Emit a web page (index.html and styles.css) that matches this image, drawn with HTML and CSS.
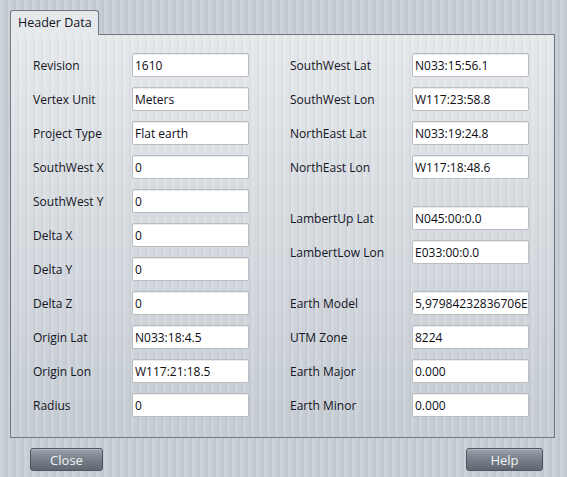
FILE: index.html
```html
<!DOCTYPE html>
<html>
<head>
<meta charset="utf-8">
<link rel="stylesheet" href="styles.css">
</head>
<body>
<div class="window">
  <div class="tabs"><div class="tab">Header Data</div></div>
  <div class="panel">
    <div class="col">
      <div class="row"><span class="lbl">Revision</span><div class="inp">1610</div></div>
      <div class="row"><span class="lbl">Vertex Unit</span><div class="inp">Meters</div></div>
      <div class="row"><span class="lbl">Project Type</span><div class="inp">Flat earth</div></div>
      <div class="row"><span class="lbl">SouthWest X</span><div class="inp">0</div></div>
      <div class="row"><span class="lbl">SouthWest Y</span><div class="inp">0</div></div>
      <div class="row"><span class="lbl">Delta X</span><div class="inp">0</div></div>
      <div class="row"><span class="lbl">Delta Y</span><div class="inp">0</div></div>
      <div class="row"><span class="lbl">Delta Z</span><div class="inp">0</div></div>
      <div class="row"><span class="lbl">Origin Lat</span><div class="inp">N033:18:4.5</div></div>
      <div class="row"><span class="lbl">Origin Lon</span><div class="inp">W117:21:18.5</div></div>
      <div class="row"><span class="lbl">Radius</span><div class="inp">0</div></div>
    </div>
    <div class="col right">
      <div class="row"><span class="lbl">SouthWest Lat</span><div class="inp">N033:15:56.1</div></div>
      <div class="row"><span class="lbl">SouthWest Lon</span><div class="inp">W117:23:58.8</div></div>
      <div class="row"><span class="lbl">NorthEast Lat</span><div class="inp">N033:19:24.8</div></div>
      <div class="row"><span class="lbl">NorthEast Lon</span><div class="inp">W117:18:48.6</div></div>
      <div class="row sep"><span class="lbl">LambertUp Lat</span><div class="inp">N045:00:0.0</div></div>
      <div class="row"><span class="lbl">LambertLow Lon</span><div class="inp">E033:00:0.0</div></div>
      <div class="row sep"><span class="lbl">Earth Model</span><div class="inp">5,97984232836706E</div></div>
      <div class="row"><span class="lbl">UTM Zone</span><div class="inp">8224</div></div>
      <div class="row"><span class="lbl">Earth Major</span><div class="inp">0.000</div></div>
      <div class="row"><span class="lbl">Earth Minor</span><div class="inp">0.000</div></div>
    </div>
  </div>
  <div class="buttons">
    <button class="btn close">Close</button>
    <button class="btn help">Help</button>
  </div>
</div>
</body>
</html>
```
FILE: styles.css
```css
html, body {
  margin: 0;
  padding: 0;
}
body {
  width: 567px;
  height: 477px;
  overflow: hidden;
  font-family: "Open Sans", "Noto Sans", sans-serif;
  font-size: 12px;
  color: #14141e;
  background-color: #c6cdd4;
  background-image: repeating-linear-gradient(90deg, rgba(255,255,255,0.10) 0 3px, rgba(0,0,0,0.0) 3px 6px, rgba(0,0,0,0.03) 6px 8px);
}
.window {
  padding: 10px 0 0 10px;
}
.tabs {
  display: flex;
  height: 24px;
}
.tab {
  width: 89px;
  box-sizing: border-box;
  border: 1px solid #6f7883;
  border-bottom: none;
  border-radius: 3px 3px 0 0;
  background: #e6e9ec;
  padding: 3px 0 0 7px;
  font-size: 12.5px;
  position: relative;
  z-index: 1;
  margin-bottom: -1px;
  height: 25px;
}
.panel {
  width: 545px;
  height: 404px;
  box-sizing: border-box;
  border: 1px solid #6f7883;
  background-color: #dde1e5;
  background-image:
    repeating-linear-gradient(90deg, rgba(255,255,255,0.12) 0 3px, rgba(0,0,0,0) 3px 6px, rgba(0,0,0,0.025) 6px 8px),
    linear-gradient(180deg, #e5e8eb 0%, #d6dbe0 45%, #c4cbd2 100%);
  display: flex;
  padding: 18px 0 0 22px;
  gap: 41px;
}
.col {
  display: flex;
  flex-direction: column;
  gap: 10px;
}
.row {
  display: flex;
  align-items: center;
  height: 24px;
}
.row.sep {
  margin-top: 17px;
}
.lbl {
  width: 99px;
  white-space: nowrap;
}
.right .lbl {
  width: 122px;
}
.inp {
  width: 117px;
  height: 24px;
  box-sizing: border-box;
  border: 1px solid #b9bdc2;
  border-radius: 2px;
  background: #ffffff;
  color: #0c0c14;
  padding: 4px 0 0 2px;
  line-height: 15px;
  white-space: nowrap;
  overflow: hidden;
  box-shadow: inset 0 1px 0 #e8eaec;
}
.buttons {
  display: flex;
  justify-content: space-between;
  padding: 10px 24px 0 20px;
}
.btn {
  height: 23px;
  box-sizing: border-box;
  border: 1px solid #4e5660;
  border-radius: 3px;
  background: linear-gradient(180deg, #9aa2ab 0%, #7a838d 45%, #5f6871 100%);
  color: #f2f4f6;
  font-family: "Open Sans", "Noto Sans", sans-serif;
  font-size: 13px;
  padding: 0;
  box-shadow: inset 0 1px 0 rgba(255,255,255,0.25);
}
.close {
  width: 73px;
}
.help {
  width: 77px;
}
```
